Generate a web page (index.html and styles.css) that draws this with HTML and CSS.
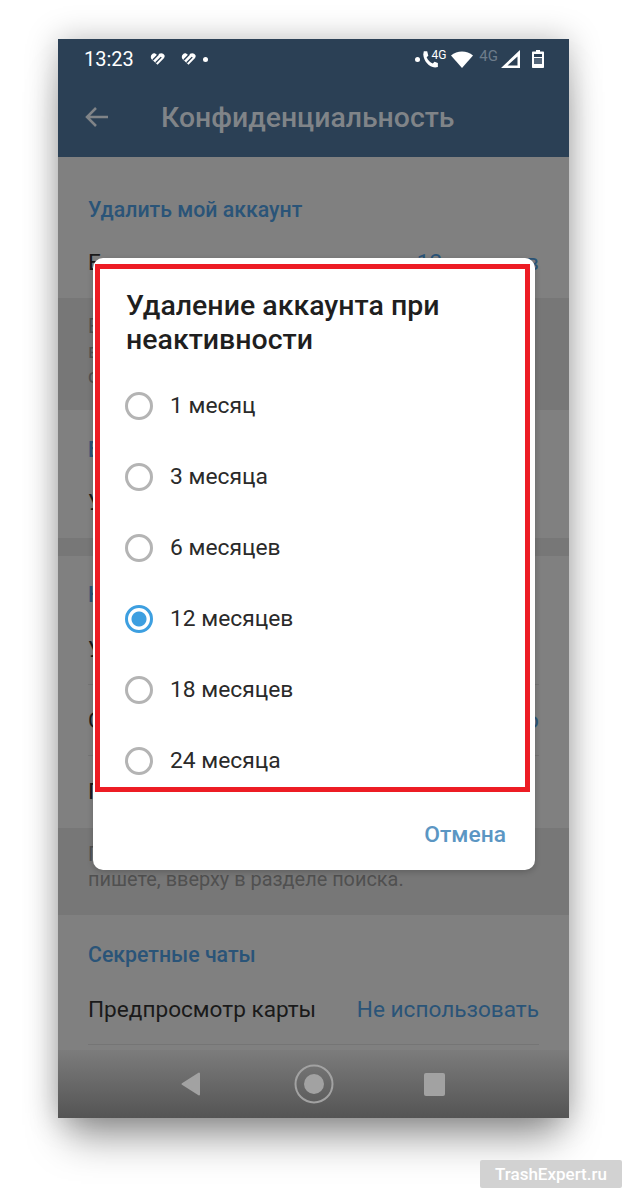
FILE: index.html
```html
<!DOCTYPE html>
<html lang="ru">
<head>
    <meta charset="UTF-8">
    <meta name="viewport" content="width=device-width, initial-scale=1.0">
    <title>Конфиденциальность</title>
    <link rel="stylesheet" href="styles.css">
</head>
<body>
    <div class="phone">
        <div class="appbar">
            <div class="status">
                <span class="clock">13:23</span>
                <svg class="tick" viewBox="0 0 16 14"><path d="M8 13 1.500 7C-.500 4 2.500 0 5.500 1L8 3C10 0 14 0 15.500 3 16 5 15 6 14 7Z" fill="#fff"/><path d="M3 8 9 2M6 11 12 5" fill="none" stroke="#2b4055" stroke-width="1.500"/></svg>
                <svg class="tick" viewBox="0 0 16 14"><path d="M8 13 1.500 7C-.500 4 2.500 0 5.500 1L8 3C10 0 14 0 15.500 3 16 5 15 6 14 7Z" fill="#fff"/><path d="M3 8 9 2M6 11 12 5" fill="none" stroke="#2b4055" stroke-width="1.500"/></svg>
                <span class="dot"></span>
                <span class="status-right">
                    <span class="dot"></span>
                    <svg class="call" viewBox="0 0 14 16"><path d="M1.500 1 4.500 1 5.500 5 4 6.500C5 9 7 11 9.500 12L11 10.500 14 11.500 14 15 11.500 15.500C6 15 1.500 10 1 4Z" fill="#fff"/></svg>
                    <span class="net">4G</span>
                    <svg class="wifi" viewBox="0 0 22 17"><path d="M0 4.500C6-1 16-1 22 4.500L11 17Z" fill="#fff"/></svg>
                    <span class="net dim">4G</span>
                    <svg class="signal" viewBox="0 0 19 18"><path d="M19 0V18H0ZM16.500 6.500 6.500 15.500H16.500Z" fill="#fff" fill-rule="evenodd"/></svg>
                    <svg class="battery" viewBox="0 0 12 18"><path d="M4 0H8V1.500H11C11.600 1.500 12 2 12 2.500V17C12 17.600 11.600 18 11 18H1C.4 18 0 17.600 0 17V2.500C0 2 .4 1.500 1 1.500H4Z" fill="#fff"/><rect x="2" y="4" width="8" height="3" fill="#2b4055"/><rect x="2" y="8" width="8" height="6" fill="#55677a"/></svg>
                </span>
            </div>
            <div class="toolbar">
                <svg class="back" viewBox="0 0 24 20"><path d="M23 10H2M11 1 2 10l9 9" fill="none" stroke="#808488" stroke-width="2.500"/></svg>
                <span class="toolbar-title">Конфиденциальность</span>
            </div>
        </div>

        <div class="settings">
            <section class="card card-delete">
                <h2>Удалить мой аккаунт</h2>
                <div class="row"><span>Если меня нет</span><span class="value">12 месяцев</span></div>
            </section>
            <p class="hint hint-delete">Если Вы ни разу не зайдёте<br>в течение этого срока,<br>сообщения будут удалены</p>
            <section class="card card-bots">
                <h2>Боты и сайты</h2>
                <div class="row"><span>Удалить платёжные данные</span></div>
            </section>
            <section class="card card-contacts">
                <h2>Контакты</h2>
                <div class="row line"><span>Удалить контакты</span></div>
                <div class="row line"><span>Синхронизировать контакты</span><span class="value">Выключено</span></div>
                <div class="row"><span>Предлагать контакты</span></div>
            </section>
            <p class="hint hint-contacts">Показывать людей, которым Вы часто<br>пишете, вверху в разделе поиска.</p>
            <section class="card card-secret">
                <h2>Секретные чаты</h2>
                <div class="row line"><span>Предпросмотр карты</span><span class="value">Не использовать</span></div>
            </section>
        </div>

        <div class="navbar">
            <svg class="nav-back" viewBox="0 0 20 24"><path d="M18 1.500V22.500L1.500 12Z" fill="#a2a2a2" stroke="#a2a2a2" stroke-linejoin="round" stroke-width="2"/></svg>
            <svg class="nav-home" viewBox="0 0 40 40"><circle cx="20" cy="20" r="18.500" fill="none" stroke="#a2a2a2" stroke-width="2"/><circle cx="20" cy="20" r="10" fill="#a2a2a2"/></svg>
            <span class="nav-recent"></span>
        </div>

        <div class="dialog">
            <h1>Удаление аккаунта при неактивности</h1>
            <ul class="options">
                <li><span class="radio"></span>1 месяц</li>
                <li><span class="radio"></span>3 месяца</li>
                <li><span class="radio"></span>6 месяцев</li>
                <li><span class="radio checked"></span>12 месяцев</li>
                <li><span class="radio"></span>18 месяцев</li>
                <li><span class="radio"></span>24 месяца</li>
            </ul>
            <div class="actions"><span class="cancel">Отмена</span></div>
            <div class="highlight"></div>
        </div>
    </div>

    <div class="watermark">TrashExpert.ru</div>
</body>
</html>
```

FILE: styles.css
```css
html, body {
    margin: 0;
    height: 1194px;
    overflow: hidden;
    background-color: white;
    font-family: Roboto, 'Liberation Sans', sans-serif;
}
.phone {
    position: relative;
    display: flex;
    flex-direction: column;
    width: 511px;
    height: 1079px;
    margin: 39px 0 0 58px;
    box-shadow: 0 0 30px rgba(0, 0, 0, 0.26), 0 30px 38px -10px rgba(0, 0, 0, 0.36);
    background-color: #808080;
}
.appbar {
    height: 118px;
    background-color: #2b4055;
    flex-shrink: 0;
}
.status {
    display: flex;
    align-items: center;
    height: 40px;
    padding: 0 25px 0 26px;
    color: white;
}
.clock {
    font-size: 20px;
    margin-right: 16px;
}
.tick {
    width: 15px;
    height: 14px;
    margin-right: 16px;
}
.tick + .dot {
    margin-left: -9px;
}
.dot {
    width: 5px;
    height: 5px;
    border-radius: 50%;
    background-color: white;
}
.status-right {
    display: flex;
    align-items: center;
    margin-left: auto;
}
.call {
    width: 16px;
    height: 18px;
    margin-left: 2px;
}
.net {
    font-size: 12px;
    margin: -8px 5px 0 -7px;
}
.net.dim {
    color: #6d7c8b;
    font-size: 15px;
    margin: -6px 3px 0 6px;
}
.wifi {
    width: 22px;
    height: 17px;
}
.signal {
    width: 19px;
    height: 18px;
    margin-right: 12px;
}
.battery {
    width: 12px;
    height: 18px;
}
.toolbar {
    display: flex;
    align-items: center;
    height: 76px;
    padding-left: 27px;
}
.back {
    width: 24px;
    height: 20px;
}
.toolbar-title {
    margin-left: 52px;
    font-size: 28.400px;
    font-weight: 500;
    color: #808488;
}
.settings {
    flex: 1;
    overflow: hidden;
    background-color: #777777;
}
.card {
    background-color: #808080;
    padding: 26px 30px 0;
    box-sizing: border-box;
}
.card h2 {
    margin: 0 0 5px;
    font-size: 21.300px;
    font-weight: 500;
    line-height: 28px;
    color: #2a5478;
}
.card-delete {
    height: 141px;
    padding-top: 39px;
}
.card-delete h2, .card-bots h2 {
    margin-bottom: 3px;
}
.card-bots {
    height: 128px;
}
.card-contacts {
    height: 272px;
    margin-top: 18px;
    padding-top: 25px;
}
.card-secret {
    height: 135px;
}
.row {
    display: flex;
    justify-content: space-between;
    align-items: center;
    height: 71px;
    font-size: 22.600px;
    color: #1a1a1a;
}
.row.line {
    border-bottom: 1px solid #757575;
    box-sizing: border-box;
}
.value {
    color: #2a5478;
}
.hint {
    margin: 0;
    padding: 14px 30px;
    font-size: 19.900px;
    line-height: 25px;
    color: #505050;
    box-sizing: border-box;
}
.hint-delete {
    height: 112px;
    padding-top: 16px;
}
.hint-contacts {
    height: 87px;
}
.navbar {
    display: flex;
    align-items: center;
    justify-content: center;
    height: 68px;
    flex-shrink: 0;
    padding-right: 2px;
    box-sizing: border-box;
    background: linear-gradient(#7c7c7c, #545454);
}
.nav-back {
    width: 20px;
    height: 24px;
}
.nav-home {
    width: 40px;
    height: 40px;
    margin: 0 90px 0 93px;
}
.nav-recent {
    width: 21px;
    height: 23px;
    background-color: #a2a2a2;
    border-radius: 2px;
}
.dialog {
    position: absolute;
    left: 35px;
    top: 219px;
    width: 442px;
    height: 612px;
    background-color: white;
    border-radius: 10px;
    box-shadow: 0 2px 6px rgba(0, 0, 0, 0.2);
}
.dialog h1 {
    margin: 31px 40px 13px 33px;
    font-size: 28.500px;
    font-weight: 500;
    line-height: 34px;
    color: #1f1f1f;
}
.options {
    margin: 0;
    padding: 0;
    list-style: none;
}
.options li {
    display: flex;
    align-items: center;
    height: 71px;
    padding-left: 32px;
    font-size: 22.800px;
    color: #2a2a2a;
}
.radio {
    width: 28px;
    height: 28px;
    margin-right: 17px;
    border: 3px solid #b4b4b4;
    border-radius: 50%;
    box-sizing: border-box;
}
.radio.checked {
    border-color: #3d9fe0;
    background: radial-gradient(circle, #3d9fe0 0 7px, white 8px);
}
.actions {
    display: flex;
    justify-content: flex-end;
    padding: 25px 29px 0 0;
}
.cancel {
    font-size: 22.800px;
    font-weight: 500;
    color: #5b96c3;
}
.highlight {
    position: absolute;
    left: 2px;
    top: 6px;
    width: 435px;
    height: 528px;
    border: 5px solid #ed1c24;
    box-sizing: border-box;
}
.watermark {
    position: absolute;
    left: 480px;
    top: 1160px;
    width: 142px;
    height: 28px;
    background-color: #d2d2d2;
    border-radius: 2px;
    color: white;
    font-size: 17px;
    font-weight: 500;
    line-height: 28px;
    text-align: center;
}
```
